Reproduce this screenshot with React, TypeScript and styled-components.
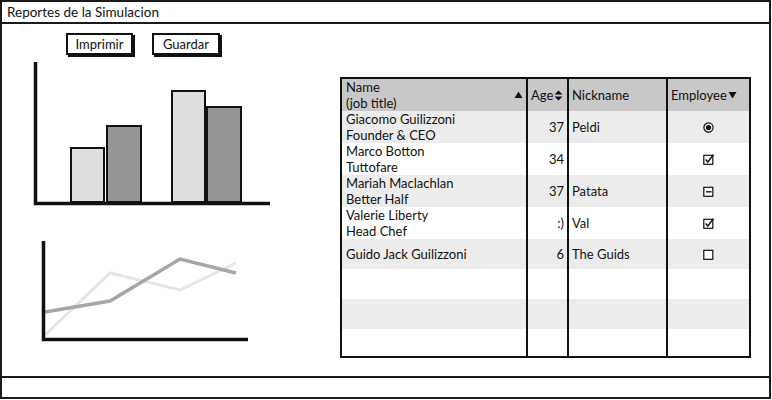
import React from "react";
import styled, { createGlobalStyle } from "styled-components";

const Global = createGlobalStyle`
  html, body { margin: 0; padding: 0; background: #fff; }
  body { width: 772px; height: 400px; overflow: hidden; font-family: Lato, "Noto Sans", sans-serif; color: #111; }
  * { box-sizing: border-box; }
`;

const Window = styled.div`
  width: 771px;
  height: 399px;
  border: 2px solid #1a1a1a;
  display: flex;
  flex-direction: column;
  background: #fff;
`;

const TitleBar = styled.div`
  height: 22px;
  border-bottom: 2px solid #1a1a1a;
  padding-left: 5px;
  font-size: 13.5px;
  line-height: 20px;
`;

const Content = styled.div`
  flex: 1;
  display: flex;
  min-height: 0;
`;

const LeftPane = styled.div`
  width: 338px;
  display: flex;
  flex-direction: column;
`;

const Toolbar = styled.div`
  display: flex;
  gap: 19px;
  padding: 9px 0 0 64px;
`;

const Button = styled.button<{ $w: number }>`
  width: ${(p) => p.$w}px;
  height: 22px;
  border: 2px solid #111;
  background: #fff;
  box-shadow: 2px 2px 0 #111;
  font-family: Lato, "Noto Sans", sans-serif;
  font-size: 13px;
  color: #111;
  padding: 0;
  line-height: 18px;
`;

const BarChart = styled.svg`
  display: block;
  margin: 4px 0 0 28px;
`;

const LineChart = styled.svg`
  display: block;
  margin: 26px 0 0 36px;
`;

const StatusBar = styled.div`
  height: 21px;
  border-top: 2px solid #1a1a1a;
`;

const TableBox = styled.div`
  width: 411px;
  height: 281px;
  margin-top: 53px;
  border: 2px solid #111;
  overflow: hidden;
  font-size: 13px;
`;

const Row = styled.div<{ $h: number; $bg: string }>`
  display: grid;
  grid-template-columns: 184px 41px 99px 1fr;
  height: ${(p) => p.$h}px;
  background: ${(p) => p.$bg};
`;

const Cell = styled.div<{ $align?: string; $divider?: boolean }>`
  display: flex;
  align-items: center;
  justify-content: ${(p) => p.$align || "flex-start"};
  border-left: ${(p) => (p.$divider ? "2px solid #111" : "none")};
  padding: 0 3px 0 3px;
  line-height: 16px;
  white-space: nowrap;
  overflow: hidden;
`;

const NameCell = styled(Cell)`
  padding-left: 4px;
  justify-content: space-between;
`;

const Stack = styled.div`
  display: flex;
  flex-direction: column;
`;

const HeadText = styled.span`
  display: inline-flex;
  align-items: center;
  gap: 1px;
`;

const Up = () => (
  <svg width="9" height="8" viewBox="0 0 9 8">
    <path d="M0.5 7 L4.5 0.5 L8.5 7 Z" fill="#111" />
  </svg>
);

const Down = () => (
  <svg width="9" height="8" viewBox="0 0 9 8">
    <path d="M0.5 1 L4.5 7.5 L8.5 1 Z" fill="#111" />
  </svg>
);

const UpDown = () => (
  <svg width="9" height="11" viewBox="0 0 9 11">
    <path d="M0.5 4.5 L4.5 0.5 L8.5 4.5 Z M0.5 6.5 L4.5 10.5 L8.5 6.5 Z" fill="#111" />
  </svg>
);

type Mark = "radio" | "check" | "mixed" | "empty" | "";

const Icon = ({ kind }: { kind: Mark }) => {
  if (!kind) return null;
  if (kind === "radio")
    return (
      <svg width="11" height="11" viewBox="0 0 11 11">
        <circle cx="5.5" cy="5.5" r="4.6" fill="none" stroke="#111" strokeWidth="1.2" />
        <circle cx="5.5" cy="5.5" r="2.6" fill="#111" />
      </svg>
    );
  return (
    <svg width="11" height="11" viewBox="0 0 11 11">
      <rect x="0.8" y="1.3" width="9" height="9" fill="#fff" stroke="#111" strokeWidth="1.2" />
      {kind === "check" && (
        <path d="M2.6 5.4 L4.8 8 L10.4 0.6" fill="none" stroke="#111" strokeWidth="1.5" />
      )}
      {kind === "mixed" && <path d="M3 5.8 H8.6" stroke="#111" strokeWidth="1.4" />}
    </svg>
  );
};

type Person = { name: string; title?: string; age: string; nick: string; mark: Mark };

const people: Person[] = [
  { name: "Giacomo Guilizzoni", title: "Founder & CEO", age: "37", nick: "Peldi", mark: "radio" },
  { name: "Marco Botton", title: "Tuttofare", age: "34", nick: "", mark: "check" },
  { name: "Mariah Maclachlan", title: "Better Half", age: "37", nick: "Patata", mark: "mixed" },
  { name: "Valerie Liberty", title: "Head Chef", age: ":)", nick: "Val", mark: "check" },
  { name: "Guido Jack Guilizzoni", age: "6", nick: "The Guids", mark: "empty" },
];

const stripe = (i: number) => (i % 2 === 0 ? "#ececec" : "#fff");

export default function App() {
  return (
    <>
      <Global />
      <Window>
        <TitleBar>Reportes de la Simulacion</TitleBar>
        <Content>
          <LeftPane>
            <Toolbar>
              <Button $w={67}>Imprimir</Button>
              <Button $w={68}>Guardar</Button>
            </Toolbar>
            <BarChart width="245" height="150" viewBox="0 0 245 150">
              <g stroke="#111" strokeWidth="2">
                <rect x="41" y="89" width="33" height="54" fill="#dedede" />
                <rect x="77" y="67" width="34" height="76" fill="#959595" />
                <rect x="142" y="32" width="33" height="111" fill="#dedede" />
                <rect x="177" y="48" width="34" height="95" fill="#959595" />
              </g>
              <path d="M5.5 3 V144.5 H240" fill="none" stroke="#111" strokeWidth="3.5" />
            </BarChart>
            <LineChart width="214" height="109" viewBox="0 0 214 109">
              <polyline points="7,100 72,38 142,55 198,28" fill="none" stroke="#e6e6e6" strokeWidth="3" />
              <polyline points="7,77 72,66 142,24 198,38" fill="none" stroke="#a6a6a6" strokeWidth="3.5" />
              <path d="M5.5 6 V104.5 H210" fill="none" stroke="#111" strokeWidth="3.5" />
            </LineChart>
          </LeftPane>
          <TableBox>
            <Row $h={32} $bg="#c8c8c8">
              <NameCell>
                <Stack>
                  <span>Name</span>
                  <span>(job title)</span>
                </Stack>
                <Up />
              </NameCell>
              <Cell $divider>
                <HeadText>
                  Age
                  <UpDown />
                </HeadText>
              </Cell>
              <Cell $divider>Nickname</Cell>
              <Cell $divider>
                <HeadText>
                  Employee
                  <Down />
                </HeadText>
              </Cell>
            </Row>
            {people.map((p, i) => (
              <Row key={p.name} $h={p.title ? 32 : 30} $bg={stripe(i)}>
                <NameCell>
                  <Stack>
                    <span>{p.name}</span>
                    {p.title && <span>{p.title}</span>}
                  </Stack>
                </NameCell>
                <Cell $divider $align="flex-end">
                  {p.age}
                </Cell>
                <Cell $divider>{p.nick}</Cell>
                <Cell $divider $align="center">
                  <Icon kind={p.mark} />
                </Cell>
              </Row>
            ))}
            {[5, 6, 7, 8].map((i) => (
              <Row key={i} $h={30} $bg={stripe(i)}>
                <NameCell />
                <Cell $divider />
                <Cell $divider />
                <Cell $divider />
              </Row>
            ))}
          </TableBox>
        </Content>
        <StatusBar />
      </Window>
    </>
  );
}
